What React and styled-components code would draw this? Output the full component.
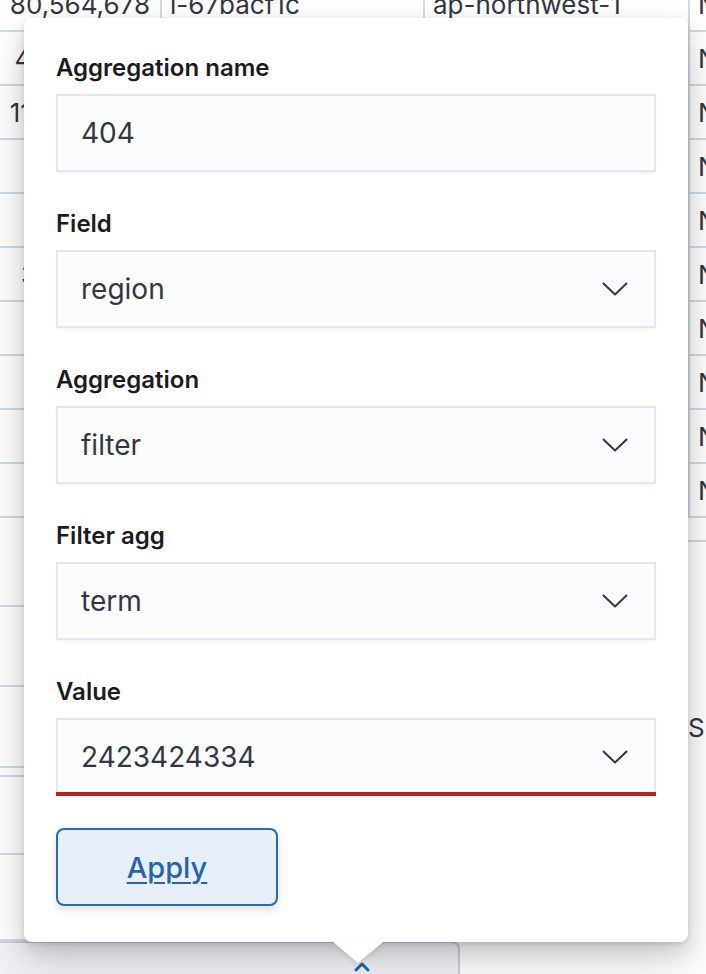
import React from "react";
import styled, { createGlobalStyle } from "styled-components";

const Global = createGlobalStyle`
  html, body { margin: 0; padding: 0; background: #ffffff; }
  body { width: 706px; height: 974px; overflow: hidden; font-family: Inter, "Noto Sans", "Liberation Sans", sans-serif; }
  #root { position: relative; width: 706px; height: 974px; overflow: hidden; }
`;

const Page = styled.div`
  position: relative;
  width: 706px;
  height: 974px;
  overflow: hidden;
  background: #ffffff;
`;

const Table = styled.div`
  margin-top: -22px;
  display: flex;
  flex-direction: column;
`;

const Row = styled.div`
  display: grid;
  grid-template-columns: 160px 263px 265px 1fr;
  height: ${(p) => p.$h || 54}px;
  border-bottom: 2px solid #d3dae6;
  box-sizing: border-box;
`;

const Cell = styled.div`
  display: flex;
  align-items: center;
  justify-content: ${(p) => (p.$right ? "flex-end" : "flex-start")};
  padding: 0 ${(p) => (p.$right ? "10px" : "0")} 0 ${(p) => (p.$right ? "0" : "8px")};
  border-left: ${(p) => (p.$first ? "none" : "2px solid #d3dae6")};
  font-size: 26px;
  color: #343741;
  white-space: nowrap;
  overflow: hidden;
`;

const Lower = styled.div`
  display: grid;
  grid-template-columns: 460px 1fr;
`;

const LowerLeft = styled.div`
  display: flex;
  flex-direction: column;
`;

const LowerLine = styled.div`
  height: ${(p) => p.$h}px;
  border-bottom: 2px solid #d3dae6;
  box-sizing: border-box;
`;

const LowerRight = styled.div`
  display: flex;
  flex-direction: column;
`;

const SideText = styled.div`
  height: ${(p) => p.$h}px;
  display: flex;
  align-items: center;
  padding-left: 228px;
  font-size: 26px;
  color: #343741;
`;

const BottomBar = styled.div`
  width: 460px;
  height: 40px;
  box-sizing: border-box;
  border-top: 2px solid #c9cfdb;
  border-right: 2px solid #c9cfdb;
  border-top-right-radius: 8px;
  background: #f1f3f6;
  display: flex;
  justify-content: flex-start;
  padding-left: 352px;
  padding-top: 18px;
`;

const Popover = styled.div`
  position: absolute;
  left: 24px;
  top: 18px;
  width: 664px;
  box-sizing: border-box;
  padding: 32px 32px 36px;
  background: #ffffff;
  border-radius: 8px;
  box-shadow: 0 2px 4px rgba(0, 0, 0, 0.1), 0 8px 20px rgba(0, 0, 0, 0.14),
    0 24px 48px rgba(0, 0, 0, 0.14);
  display: flex;
  flex-direction: column;
  gap: 32px;
`;

const Arrow = styled.div`
  position: absolute;
  left: 309px;
  bottom: -21px;
  width: 0;
  height: 0;
  border-left: 25px solid transparent;
  border-right: 25px solid transparent;
  border-top: 21px solid #ffffff;
  filter: drop-shadow(0 2px 2px rgba(0, 0, 0, 0.1));
`;

const Form = styled.div`
  display: flex;
  flex-direction: column;
  gap: 34px;
`;

const FieldRow = styled.div`
  display: flex;
  flex-direction: column;
  gap: 8px;
`;

const Label = styled.label`
  font-size: 24px;
  line-height: 36px;
  font-weight: 600;
  color: #1a1c21;
`;

const InputBox = styled.div`
  height: 78px;
  box-sizing: border-box;
  border: 2px solid #e4e7ef;
  background: #fbfcfd;
  box-shadow: 0 2px 3px rgba(0, 0, 0, 0.04);
  display: flex;
  align-items: center;
  justify-content: space-between;
  padding: 0 26px 0 23px;
  font-size: 28px;
  color: #343741;
  position: relative;
  ${(p) =>
    p.$invalid &&
    `
    &::after {
      content: "";
      position: absolute;
      left: -2px;
      right: -2px;
      bottom: -2px;
      height: 4px;
      background: #b0261c;
    }
  `}
`;

const Chevron = () => (
  <svg width="26" height="14" viewBox="0 0 26 14" fill="none">
    <path d="M1.5 1.5 L13 12.5 L24.5 1.5" stroke="#343741" strokeWidth="2" strokeLinecap="round" strokeLinejoin="round" />
  </svg>
);

const ApplyButton = styled.button`
  align-self: flex-start;
  width: 222px;
  height: 78px;
  box-sizing: border-box;
  border: 2px solid #2a6ab3;
  border-radius: 8px;
  background: #e7eff8;
  color: #2763ae;
  font-family: inherit;
  font-size: 29px;
  font-weight: 500;
  text-decoration: underline;
  text-underline-offset: 4px;
  text-decoration-thickness: 2px;
  box-shadow: 0 4px 8px rgba(0, 0, 0, 0.12);
  cursor: pointer;
`;

const UpIcon = () => (
  <svg width="20" height="12" viewBox="0 0 20 12" fill="none">
    <path d="M4 9 L10 3 L16 9" stroke="#2763ae" strokeWidth="3" strokeLinecap="round" strokeLinejoin="round" />
  </svg>
);

const rows = [
  ["80,564,678", "i-67bacf1c", "ap-northwest-1", "N"],
  ["42,156,980", "i-2d3f1b9a", "us-east-1", "N"],
  ["118,734,210", "i-8c1e4a7d", "eu-west-1", "N"],
  ["5,832,110", "i-4b9d6e2f", "us-west-2", "N"],
  ["7,410,295", "i-91ac03e5", "ap-south-1", "N"],
  ["36,840,112", "i-5e7f2c18", "eu-central-1", "N"],
  ["2,906,431", "i-0d6b9a43", "sa-east-1", "N"],
  ["8,115,720", "i-73c2e8b1", "ap-northeast-2", "N"],
  ["6,240,318", "i-e4a15d90", "us-east-2", "N"],
  ["9,503,647", "i-b8f3027c", "ca-central-1", "N"],
];

const fields = [
  { label: "Aggregation name", value: "404", select: false },
  { label: "Field", value: "region", select: true },
  { label: "Aggregation", value: "filter", select: true },
  { label: "Filter agg", value: "term", select: true },
  { label: "Value", value: "2423424334", select: true, invalid: true },
];

export default function App() {
  return (
    <Page>
      <Global />
      <Table>
        {rows.map((r, i) => (
          <Row key={i}>
            <Cell $first $right>{r[0]}</Cell>
            <Cell>{r[1]}</Cell>
            <Cell>{r[2]}</Cell>
            <Cell>{r[3]}</Cell>
          </Row>
        ))}
      </Table>
      <Lower>
        <LowerLeft>
          <LowerLine $h={89} />
          <LowerLine $h={80} />
          <LowerLine $h={81} />
          <LowerLine $h={9} />
          <LowerLine $h={78} />
          <LowerLine $h={86} />
        </LowerLeft>
        <LowerRight>
          <LowerLine $h={24} />
          <SideText $h={370}>S</SideText>
        </LowerRight>
      </Lower>
      <BottomBar>
        <UpIcon />
      </BottomBar>
      <Popover>
        <Form>
          {fields.map((f) => (
            <FieldRow key={f.label}>
              <Label>{f.label}</Label>
              <InputBox $invalid={f.invalid}>
                <span>{f.value}</span>
                {f.select && <Chevron />}
              </InputBox>
            </FieldRow>
          ))}
        </Form>
        <ApplyButton>Apply</ApplyButton>
        <Arrow />
      </Popover>
    </Page>
  );
}
